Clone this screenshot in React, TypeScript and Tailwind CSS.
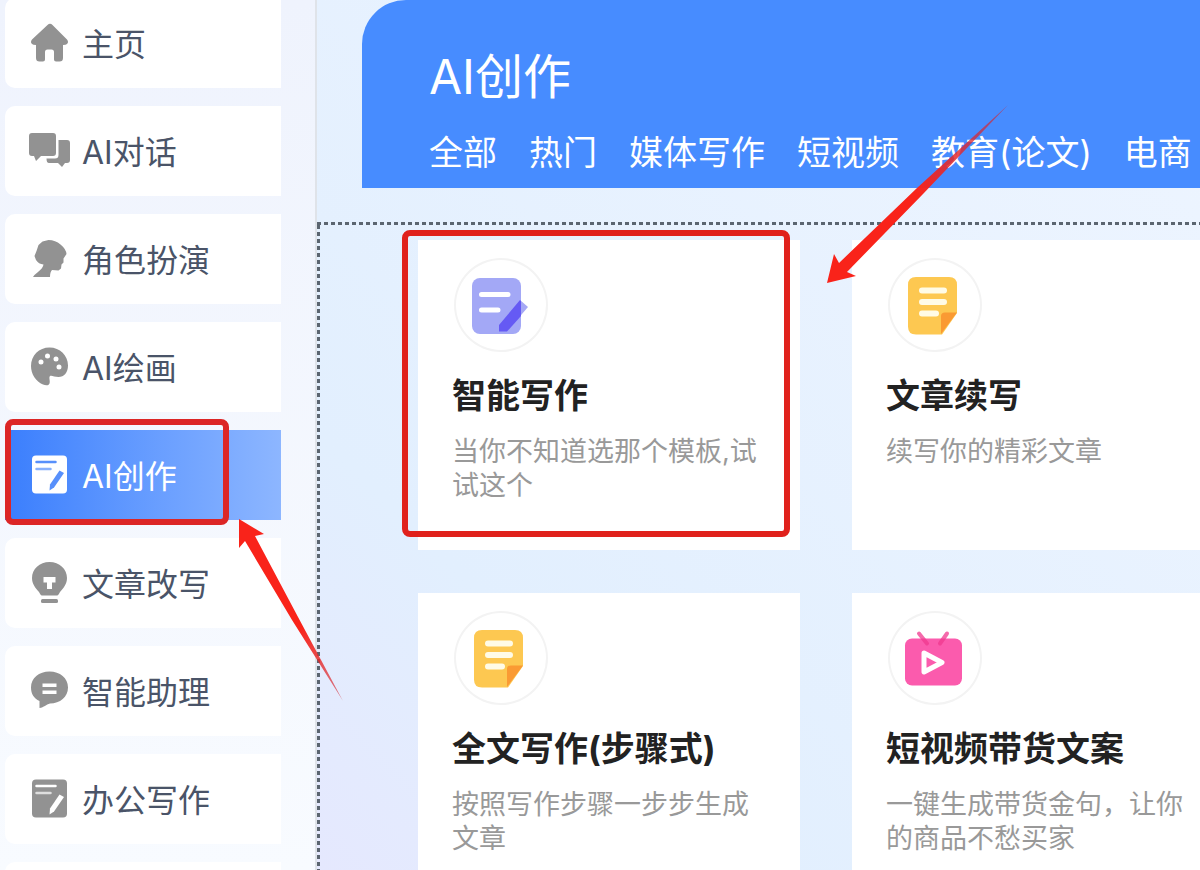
import type { ReactNode } from "react";
import { clsx } from "clsx";

type NavItem = { label: string; icon: ReactNode; active?: boolean };
type Template = { title: string; desc: string; icon: ReactNode; marked?: boolean };

function NavIcon({ children }: { children: ReactNode }) {
  return (
    <svg viewBox="0 0 42 42" className="size-[42px] shrink-0" fill="currentColor" aria-hidden="true">
      {children}
    </svg>
  );
}

function HomeIcon() {
  return (
    <NavIcon>
      <path d="M19.5 3q2.5-2.5 5 0L39 17.5q2 2.5 0 4.5-1 1-4 1v13q0 3.5-3.5 3.5H28q-2 0-2-2V30q0-2.5-2.5-2.5h-4Q17 27.5 17 30v7.5q0 2-2 2h-3.5Q8 39.5 8 36V23q-3 0-4-1-2-2 0-4.5Z" />
    </NavIcon>
  );
}

function ChatIcon() {
  return (
    <NavIcon>
      <path d="M4 3h21q3 0 3 3v17q0 3-3 3H13l-5 5-2-5H4q-3 0-3-3V6q0-3 3-3Z" />
      <path d="M30.5 10H39q3 0 3 3v17q0 3-3 3h-2l-3 4-4-4H21q-2.5 0-2.5-4.5H27q3.5 0 3.5-3.5Z" />
    </NavIcon>
  );
}

function HeadIcon() {
  return (
    <NavIcon>
      <path d="M5 39q1-2 5-5 5-4 5.5-7.5-5-.5-7.5-4.5L6.5 18l2-5 2-6 4-3.5L20.5 2q7 0 12 4.5Q38 11 38.5 16l-3 4.5v4l-2 2-.5 4-2.5 2-6.5-.5q-2 2-2 7Z" />
    </NavIcon>
  );
}

function PaletteIcon() {
  return (
    <NavIcon>
      <path
        fillRule="evenodd"
        d="M21.5 1.5C32 1.5 40 9.5 40 19.5c0 7-4 11.5-9.5 11.5-4 0-7-2-8.5-1-1.5 1.5.5 5-.5 7.5-1 2.5-4 2-6.5 1C8 35.5 3 28.5 3 20 3 9.5 11 1.5 21.5 1.5ZM13 13.5a2.5 2.5 0 1 0 0 5 2.5 2.5 0 1 0 0-5ZM19.5 7.5a2.5 2.5 0 1 0 0 5 2.5 2.5 0 1 0 0-5ZM28 10.5a2.5 2.5 0 1 0 0 5 2.5 2.5 0 1 0 0-5ZM31 18.5a2.5 2.5 0 1 0 0 5 2.5 2.5 0 1 0 0-5Z"
      />
    </NavIcon>
  );
}

function DraftIcon({ lines }: { lines: string }) {
  return (
    <NavIcon>
      <rect x="4" y="1.5" width="35" height="38" rx="4" />
      <g stroke={lines} strokeLinecap="round">
        <path d="M8.5 8h19" strokeWidth="2.5" />
        <path d="M8.5 15h14" strokeWidth="2.5" strokeOpacity=".7" />
      </g>
      <path d="m31.5 16.5 4.5 2.5-10 14.5-4.5 3 .5-6Z" fill={lines} />
    </NavIcon>
  );
}

function BulbIcon() {
  return (
    <NavIcon>
      <path
        fillRule="evenodd"
        d="M21.5 0C31.5 0 39 7 39 16c0 6-3.5 10-7 14-1 1.5-1.5 3.5-3 3.5H14c-1.5 0-2-2-3-3.5C7.5 26 4 22 4 16 4 7 11.5 0 21.5 0ZM15.5 15v5.5H19V27h5v-6.5h3.5V15Z"
      />
      <rect x="13" y="37" width="17" height="4" rx="1.5" />
    </NavIcon>
  );
}

function AssistantIcon() {
  return (
    <NavIcon>
      <path
        fillRule="evenodd"
        d="M21.5 1.5C32 1.5 40 8 40 17.5S32 33.5 22 33.5c-4 1-6 4-10.5 4.5V31C6 28.5 3 24 3 17.5 3 8 11 1.5 21.5 1.5ZM14.5 13.5V17h14v-3.5ZM14.5 20.5V24h14v-3.5Z"
      />
    </NavIcon>
  );
}

function WriteArt() {
  return (
    <svg viewBox="0 0 94 94" className="size-full" aria-hidden="true">
      <path d="m66 42 8 7-21 24.5H45V67Z" fill="#a5a8f5" />
      <rect x="18" y="20" width="49" height="56" rx="8" fill="#a3a8f6" />
      <path d="m66 42 1 1v15L53 73.5h-8V67Z" fill="#655af4" />
      <path d="M27.5 36.5H54M27.5 52H44" stroke="#fff" strokeWidth="5" strokeLinecap="round" />
    </svg>
  );
}

function NoteArt() {
  return (
    <svg viewBox="0 0 94 94" className="size-full" aria-hidden="true">
      <path d="M28 19h33q8 0 8 8v28L54 76.5H28q-8 0-8-8V27q0-8 8-8Z" fill="#fdc851" />
      <path d="M69 54.5 53 76V58q0-3.5 4-3.5Z" fill="#fa9a33" />
      <path d="M34 32.5h22M34 44h22M34 55.5h14" stroke="#fffbe6" strokeWidth="6" strokeLinecap="round" />
    </svg>
  );
}

function VideoArt() {
  return (
    <svg viewBox="0 0 94 94" className="size-full" aria-hidden="true">
      <rect x="17" y="27.5" width="57" height="47" rx="7" fill="#fb5bad" />
      <path d="m31 22.5 8 10M59 22.5l-7 10" stroke="#f0388f" strokeOpacity=".75" strokeWidth="4" strokeLinecap="round" />
      <path d="m36 42 18 9.5L36 61Z" fill="none" stroke="#fff" strokeWidth="5" strokeLinejoin="round" />
    </svg>
  );
}

const NAV: NavItem[] = [
  { label: "主页", icon: <HomeIcon /> },
  { label: "AI对话", icon: <ChatIcon /> },
  { label: "角色扮演", icon: <HeadIcon /> },
  { label: "AI绘画", icon: <PaletteIcon /> },
  { label: "AI创作", icon: <DraftIcon lines="#5890fb" />, active: true },
  { label: "文章改写", icon: <BulbIcon /> },
  { label: "智能助理", icon: <AssistantIcon /> },
  { label: "办公写作", icon: <DraftIcon lines="#ffffff" /> },
];

const TABS = ["全部", "热门", "媒体写作", "短视频", "教育(论文)", "电商"];

const TEMPLATES: Template[] = [
  { title: "智能写作", desc: "当你不知道选那个模板,试试这个", icon: <WriteArt />, marked: true },
  { title: "文章续写", desc: "续写你的精彩文章", icon: <NoteArt /> },
  { title: "全文写作(步骤式)", desc: "按照写作步骤一步步生成文章", icon: <NoteArt /> },
  { title: "短视频带货文案", desc: "一键生成带货金句，让你的商品不愁买家", icon: <VideoArt /> },
];

function Sidebar() {
  return (
    <aside className="w-[317px] shrink-0 border-r-2 border-[#dfe3e9] bg-linear-to-b from-[#eff3fd] to-[#f8fbff] pl-[5px] pr-[34px]">
      <nav className="-mt-0.5 flex flex-col gap-[18px]">
        {NAV.map((item) => (
          <a
            key={item.label}
            href="#"
            className={clsx(
              "relative flex h-[90px] shrink-0 items-center gap-3 pl-[23px] text-[32px]",
              item.active
                ? "bg-linear-to-r from-[#3a7efd] to-[#8db6ff] text-white"
                : "rounded-l-[10px] bg-white text-[#4a5468]"
            )}
          >
            <span className={item.active ? "text-white" : "text-[#929292]"}>{item.icon}</span>
            <span className="pt-1 whitespace-nowrap">{item.label}</span>
            {item.active && (
              <span className="pointer-events-none absolute -top-[11px] left-0 h-[106px] w-[224px] rounded-lg border-[6px] border-[#dc2626]" />
            )}
          </a>
        ))}
        <div className="h-[90px] shrink-0 rounded-l-[10px] bg-white" />
      </nav>
    </aside>
  );
}

function TemplateCard({ template }: { template: Template }) {
  return (
    <article className="relative min-h-[310px] bg-white px-[34px] pt-[18px] pb-6">
      <div className="ml-0.5 size-[94px] rounded-full shadow-[inset_0_0_0_2px_#f3f3f3]">{template.icon}</div>
      <h2 className="mt-[21px] text-[34px] leading-[46px] font-bold whitespace-nowrap text-[#222]">{template.title}</h2>
      <p className="mt-4 text-[27px] leading-[34px] text-[#999]">{template.desc}</p>
      {template.marked && (
        <span className="pointer-events-none absolute -top-[10px] -left-[16px] h-[307px] w-[388px] rounded-lg border-[6px] border-[#e0211c]" />
      )}
    </article>
  );
}

function Arrows() {
  return (
    <svg className="pointer-events-none absolute top-0 left-0 h-[870px] w-[1200px]" viewBox="0 0 1200 870" aria-hidden="true">
      <defs>
        <linearGradient id="fadeDown" gradientUnits="userSpaceOnUse" x1="827" y1="283" x2="1007" y2="105">
          <stop offset=".5" stopColor="#f9231a" />
          <stop offset="1" stopColor="#c8283c" stopOpacity=".6" />
        </linearGradient>
        <linearGradient id="fadeUp" gradientUnits="userSpaceOnUse" x1="239" y1="519" x2="342" y2="700">
          <stop offset=".6" stopColor="#f9231a" />
          <stop offset="1" stopColor="#d0303c" stopOpacity=".6" />
        </linearGradient>
      </defs>
      <path d="M827 283 834 254 839 263 917 188 1008 105 923 194 847 272 856 276Z" fill="url(#fadeDown)" />
      <path d="M239 519 264 534 255 536 298 617 343 701 292 620 245 541 239 548Z" fill="url(#fadeUp)" />
    </svg>
  );
}

export default function App() {
  return (
    <div className="relative flex h-screen overflow-hidden font-['Inter','Noto_Sans_CJK_SC',sans-serif]">
      <Sidebar />
      <main className="flex min-w-0 flex-1 flex-col overflow-hidden bg-linear-to-tr from-[#e5e8fe] via-[#e2effe] via-25% to-[#eef5ff]">
        <header className="ml-[45px] flex h-[188px] shrink-0 flex-col rounded-tl-[44px] bg-[#478cff] pt-[45px] pl-[67px] text-white">
          <h1 className="text-[48px] leading-[64px]">AI创作</h1>
          <div className="mt-[22px] flex gap-8 text-[34px] leading-[44px]">
            {TABS.map((tab) => (
              <button key={tab} type="button" className="whitespace-nowrap">
                {tab}
              </button>
            ))}
          </div>
        </header>

        <section className="mt-[34px] flex flex-1 flex-col">
          <div className="h-[3px] shrink-0 bg-[repeating-linear-gradient(90deg,#5b6570_0_4px,transparent_4px_7px)]" />
          <div className="flex flex-1">
            <div className="w-[3px] shrink-0 bg-[repeating-linear-gradient(180deg,#5b6570_0_4px,transparent_4px_7px)]" />
            <div className="-mr-[34px] ml-[98px] mt-[15px] grid min-w-0 flex-1 grid-cols-2 content-start gap-x-[52px] gap-y-[43px]">
              {TEMPLATES.map((template) => (
                <TemplateCard key={template.title} template={template} />
              ))}
            </div>
          </div>
        </section>
      </main>
      <Arrows />
    </div>
  );
}
